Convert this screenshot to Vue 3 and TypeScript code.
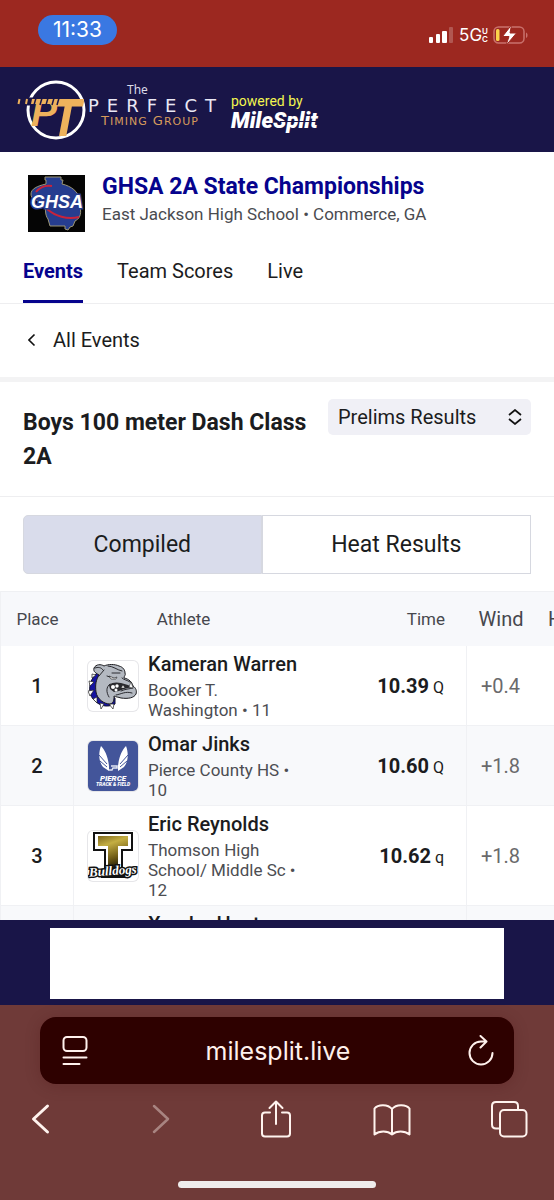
<script setup lang="ts">
import { ref } from 'vue'

interface Result {
  place: string
  name: string
  school: string
  grade: string
  time: string
  mark: string
  wind: string
  logo: 'bulldog' | 'pierce' | 'thomson' | 'none'
}

const tabs = ['Events', 'Team Scores', 'Live']
const activeTab = ref('Events')
const views = ['Compiled', 'Heat Results']
const activeView = ref('Compiled')
const round = ref('Prelims Results')
const address = ref('milesplit.live')

const results: Result[] = [
  { place: '1', name: 'Kameran Warren', school: 'Booker T. Washington', grade: '11', time: '10.39', mark: 'Q', wind: '+0.4', logo: 'bulldog' },
  { place: '2', name: 'Omar Jinks', school: 'Pierce County HS', grade: '10', time: '10.60', mark: 'Q', wind: '+1.8', logo: 'pierce' },
  { place: '3', name: 'Eric Reynolds', school: 'Thomson High School/ Middle Sc', grade: '12', time: '10.62', mark: 'q', wind: '+1.8', logo: 'thomson' },
  { place: '', name: 'Xander Hunt', school: '', grade: '', time: '', mark: '', wind: '', logo: 'none' },
]
</script>

<template>
  <div class="screen">
    <div class="status">
      <span class="clock">11:33</span>
      <div class="indicators">
        <svg class="signal" viewBox="0 0 24 16" width="24" height="16" aria-hidden="true">
          <rect x="0" y="10" width="4" height="6" rx="1" fill="#fff" />
          <rect x="7" y="7" width="4" height="9" rx="1" fill="#fff" />
          <rect x="13" y="4" width="5" height="12" rx="1" fill="#fff" />
          <rect x="20" y="0" width="4" height="16" rx="1" fill="#fff" opacity=".22" />
        </svg>
        <span class="network">5G</span>
        <span class="carrier"><span>U</span><span>C</span></span>
        <svg class="battery" viewBox="0 0 35 20" width="35" height="20" aria-hidden="true">
          <rect x="1" y="2" width="30" height="16" rx="4.500" fill="none" stroke="#c9716c" stroke-width="1.500" />
          <path d="M33 7.500v5.500c2-.6 2-4.900 0-5.500Z" fill="#c9716c" />
          <rect x="3" y="4" width="3.500" height="12" rx="1.500" fill="#fbd24a" />
          <path d="M18.500 0 9.500 11.500h6.500L13 20.500 23.500 8H17Z" fill="#fff" stroke="#9c2820" stroke-width="1" />
        </svg>
      </div>
    </div>

    <header class="brand">
      <svg class="ptg" viewBox="0 0 200 66" width="200" height="66" role="img" aria-label="The Perfect Timing Group">
        <circle cx="38" cy="33" r="28" fill="none" stroke="#fff" stroke-width="3" />
        <path d="M6 24.500h20" stroke="#191548" stroke-width="8" />
        <text x="13" y="49" class="pt-p">P</text>
        <text x="32" y="59" class="pt-t">T</text>
        <path d="M14 22h52l-1 5H13Z" fill="#eeb25c" />
        <path d="m1.500 22-1 5M9 22l-1 5" stroke="#eeb25c" stroke-width="2" />
        <path d="m18 21-2 7M24 21l-2 7M30 21l-2 7M36 21l-2 7M41 21l-2 7" stroke="#191548" stroke-width="1.500" />
        <text x="109" y="17" class="pt-the">The</text>
        <text x="70" y="35" class="pt-perfect">PERFECT</text>
        <text x="83" y="48" class="pt-timing">T<tspan class="sc">IMING</tspan> G<tspan class="sc">ROUP</tspan></text>
      </svg>
      <div class="powered">
        <span class="by">powered by</span>
        <span class="milesplit">MileSplit</span>
      </div>
    </header>

    <main class="page">
      <section class="meet">
        <svg class="meet-logo" viewBox="0 0 57 57" width="57" height="57" role="img" aria-label="GHSA">
          <rect width="57" height="57" fill="#050505" />
          <path d="M17 2h16v3h2l-1 4c9 2 17 8 17 15l1 8c2 8-1 12-5 14l-2 5-3 1-2 3-3-1v-3H22l-2-7c-4-5-1-11-5-17-7-1-12-3-12-8 0-5 6-8 15-10V5h-1Z" fill="#263d8f" stroke="#9c9675" stroke-width="1" />
          <path d="M8 17c4-5 10-7 16-6M19 34c8 7 20 11 32 8" fill="none" stroke="#c8233b" stroke-width="2" />
          <text x="3" y="33" class="ghsa">GHSA</text>
        </svg>
        <div>
          <h1>GHSA 2A State Championships</h1>
          <p>East Jackson High School • Commerce, GA</p>
        </div>
      </section>

      <nav class="tabs">
        <a v-for="tab in tabs" :key="tab" href="#" :class="{ active: tab === activeTab }" @click.prevent="activeTab = tab">{{ tab }}</a>
      </nav>

      <a class="all-events" href="#" @click.prevent>
        <svg viewBox="0 0 8 14" width="8" height="14" aria-hidden="true"><path d="M6.500 1.500 1 7l5.500 5.500" fill="none" stroke="#111" stroke-width="1.600" /></svg>
        <span>All Events</span>
      </a>

      <section class="event">
        <h2>Boys 100 meter Dash Class 2A</h2>
        <div class="round">
          <select v-model="round" aria-label="Round">
            <option>Prelims Results</option>
            <option>Finals Results</option>
          </select>
          <svg viewBox="0 0 14 16" width="14" height="16" aria-hidden="true"><path d="m1 6 6-5 6 5M1 10l6 5 6-5" fill="none" stroke="#111" stroke-width="1.700" /></svg>
        </div>
      </section>

      <div class="views">
        <button v-for="view in views" :key="view" type="button" :class="{ active: view === activeView }" @click="activeView = view">{{ view }}</button>
      </div>

      <div class="results">
        <table>
          <colgroup>
            <col class="c-place" /><col class="c-athlete" /><col class="c-time" /><col class="c-wind" /><col class="c-heat" />
          </colgroup>
          <thead>
            <tr>
              <th>Place</th>
              <th class="who">Athlete</th>
              <th class="time">Time</th>
              <th class="large">Wind</th>
              <th class="large heat">Heat</th>
            </tr>
          </thead>
          <tbody>
            <tr v-for="r in results" :key="r.name">
              <td class="place">{{ r.place }}</td>
              <td>
                <div class="athlete">
                  <svg v-if="r.logo === 'bulldog'" class="team" viewBox="0 0 50 50" role="img" aria-label="Bulldog">
                    <path d="M9 12C0 20 0 32 5 38c6 7 14 9 22 5l0-6-12-6-3-17Z" fill="#1513a0" stroke="#14142c" />
                    <path d="m1 20 5 1-4 4ZM0 30l6-1-4 6ZM5 38l4-2 0 6ZM12 42l4 1-3 5ZM21 43l5 0-1 5ZM4 13l4 1-4 3Z" fill="#fff" stroke="#222" stroke-width=".7" />
                    <path d="M6 7C8 3 13 3 16 5c4-2 11-2 15 0 4 1 6 4 6 7 1 2-1 3-1 5 5 1 8 4 9 8 3 2 4 5 3 8-2 4-8 5-15 4-3-1-5-1-7-2 0 4 0 7-4 8-6 0-13-5-14-12-1-7 0-12 3-17-3-2-6-3-5-7Z" fill="#b4b9c1" stroke="#1c1c20" stroke-width="1" />
                    <path d="M7 7c3-1 6-1 8 2M11 15l5-6M20 5c5 0 9 4 14 5M24 12l8 0M19 15l6 2M22 23c-4 3-4 8-1 13M28 34c6-1 9-4 16-2M34 17c2 2 5 2 8 4M45 27c-4 1-8 1-12 3" fill="none" stroke="#1c1c20" stroke-width=".9" stroke-linecap="round" />
                    <path d="M21 24c3-3 8-3 12-2l7 2 4 2-8 2-5 2-5 1-4-3Z" fill="#2a2a2e" />
                    <circle cx="25" cy="26" r="2" fill="#fff" /><circle cx="29" cy="25" r="1.700" fill="#fff" /><circle cx="28" cy="29" r="1.500" fill="#fff" />
                    <path d="m33 27 2-3 2 3ZM41 26l2-5 2 6Z" fill="#fff" stroke="#222" stroke-width=".5" />
                    <path d="m21 15 5 2 3-1-1 2h-5Z" fill="#fff" stroke="#1c1c20" stroke-width=".6" />
                  </svg>
                  <svg v-else-if="r.logo === 'pierce'" class="team" viewBox="0 0 50 50" role="img" aria-label="Pierce Track and Field">
                    <rect width="50" height="50" fill="#43559a" />
                    <path d="M13 5c-3 8-2 16 2 21l6 4 0-5C20 16 17 9 13 5ZM38 5c3 8 2 16-2 21l-6 4 0-5c1-9 4-16 8-20Z" fill="#fff" />
                    <path d="m11 14 8 9M12 20l7 6M40 14l-8 9M39 20l-7 6" stroke="#43559a" stroke-width="1" />
                    <path d="M23 25h6v2h-4l-1 2h-3" fill="none" stroke="#dfe4f2" stroke-width="1.500" />
                    <text x="25" y="40" text-anchor="middle" class="pierce">PIERCE</text>
                    <text x="25" y="45" text-anchor="middle" class="track">TRACK &amp; FIELD</text>
                  </svg>
                  <svg v-else-if="r.logo === 'thomson'" class="team" viewBox="0 0 50 50" role="img" aria-label="Thomson Bulldogs">
                    <defs>
                      <linearGradient id="gold" x1="0" x2=".3" y1="0" y2="1"><stop offset="0" stop-color="#7c661c" /><stop offset=".3" stop-color="#c4ae42" /><stop offset=".7" stop-color="#6d5913" /><stop offset="1" stop-color="#15120a" /></linearGradient>
                    </defs>
                    <path d="M5 1h40v19H35v21h2v6H13v-6h3V20H5Z" fill="#111" />
                    <path d="M7 3h36v15H33v23H18V18H7Z" fill="#fff" />
                    <path d="M10 5h30v10H30v26H20V15H10Z" fill="url(#gold)" />
                    <text x="25" y="44" text-anchor="middle" class="bulldogs" transform="rotate(-4 25 42)">Bulldogs</text>
                  </svg>
                  <span v-else class="team blank"></span>
                  <div>
                    <div class="name">{{ r.name }}</div>
                    <div class="school">{{ r.school }}<template v-if="r.grade"> • {{ r.grade }}</template></div>
                  </div>
                </div>
              </td>
              <td class="time"><strong>{{ r.time }}</strong> <span>{{ r.mark }}</span></td>
              <td class="wind">{{ r.wind }}</td>
              <td></td>
            </tr>
          </tbody>
        </table>
      </div>
    </main>

    <aside class="sponsor"><div></div></aside>

    <footer class="browser">
      <div class="address">
        <button type="button" aria-label="Page settings">
          <svg viewBox="0 0 26 32" width="26" height="32" fill="none" stroke="#fff1ec" stroke-width="2" stroke-linecap="round" aria-hidden="true">
            <rect x="1.500" y="2" width="23" height="14" rx="3.500" /><path d="M1.500 22.500h23M1.500 29h16" />
          </svg>
        </button>
        <input v-model="address" type="text" aria-label="Address" />
        <button type="button" aria-label="Reload">
          <svg viewBox="0 0 26 32" width="26" height="32" fill="none" stroke="#fff1ec" stroke-width="2" stroke-linecap="round" stroke-linejoin="round" aria-hidden="true">
            <path d="M24.500 18A11.500 11.500 0 1 1 13 6.500h5M12.500 1 18.500 6.500l-6 6" />
          </svg>
        </button>
      </div>
      <div class="tools">
        <button type="button" aria-label="Back">
          <svg viewBox="0 0 38 38"><path d="M25.500 6 11.500 19l14 13" stroke-width="3" /></svg>
        </button>
        <button type="button" aria-label="Forward" disabled>
          <svg viewBox="0 0 38 38"><path d="m15 6 14 13-14 13" stroke-width="2.500" /></svg>
        </button>
        <button type="button" aria-label="Share">
          <svg viewBox="0 0 38 38"><path d="M14 12.500H9q-3 0-3 3v18q0 3 3 3h22q3 0 3-3v-18q0-3-3-3h-5M20 24V2M13.500 8 20 1.500 26.500 8" /></svg>
        </button>
        <button type="button" aria-label="Bookmarks">
          <svg viewBox="0 0 38 38"><path d="M19 34.500V9c-4-5-14-5-17.500-.5v26c5-4 13-4 17.500 0 4.500-4 12.500-4 17.500 0v-26C33 4 23 4 19 9" /></svg>
        </button>
        <button type="button" aria-label="Tabs">
          <svg viewBox="0 0 38 38"><path d="M9.500 28.500H6q-4 0-4-4V6q0-4 4-4h18q4 0 4 4v3.500" /><rect x="10" y="10" width="26.500" height="26.500" rx="4" /></svg>
        </button>
      </div>
      <div class="home"></div>
    </footer>
  </div>
</template>

<style>
body {
  margin: 0;
}
</style>

<style scoped>
* {
  box-sizing: border-box;
}
.screen {
  display: flex;
  flex-direction: column;
  height: 100vh;
  overflow: hidden;
  background: #fff;
  color: #1b1c20;
  font-family: Roboto, "Liberation Sans", sans-serif;
}
button,
select,
input {
  font-family: inherit;
  color: inherit;
  border: 0;
  padding: 0;
  margin: 0;
  background: none;
}
a {
  color: inherit;
  text-decoration: none;
}
h1,
h2,
p {
  margin: 0;
}
.status {
  flex: none;
  display: flex;
  justify-content: space-between;
  align-items: flex-start;
  height: 67px;
  padding: 15px 26px 0 38px;
  background: #9c2820;
  color: #fff;
  font-family: Inter, sans-serif;
}
.clock {
  width: 79px;
  border-radius: 15px;
  background: #3a78e2;
  font-size: 21px;
  line-height: 30px;
  text-align: center;
}
.indicators {
  display: flex;
  align-items: center;
  padding-top: 10px;
}
.network {
  margin-left: 6px;
  font-size: 17px;
  line-height: 20px;
}
.carrier {
  display: flex;
  flex-direction: column;
  font-size: 8px;
  font-weight: 600;
  line-height: 8px;
}
.battery {
  margin-left: 5px;
}
.brand {
  flex: none;
  display: flex;
  align-items: center;
  height: 85px;
  padding-left: 18px;
  background: #191548;
}
.ptg {
  flex: none;
  overflow: visible;
}
.pt-p,
.pt-t {
  font: italic 700 39px "Liberation Sans", sans-serif;
  fill: #eeb25c;
}
.pt-t {
  font-size: 50px;
}
.pt-the {
  font: 12px "Noto Sans", sans-serif;
  fill: #dcdbe8;
}
.pt-perfect {
  font: 18px "DejaVu Sans", sans-serif;
  letter-spacing: 8px;
  fill: #e9e7f5;
}
.pt-timing {
  font: 13px "DejaVu Sans", sans-serif;
  letter-spacing: 1px;
  fill: #d69b5c;
}
.sc {
  font-size: 11px;
}
.powered {
  display: flex;
  flex-direction: column;
  margin: 5px 0 0 13px;
}
.by {
  color: #f3f64f;
  font-size: 14px;
  line-height: 18px;
}
.milesplit {
  position: relative;
  color: #fff;
  font-size: 22px;
  font-style: italic;
  font-weight: 900;
  line-height: 22px;
}
.milesplit::after {
  content: "";
  position: absolute;
  top: 11px;
  right: 0;
  width: 38px;
  height: 1px;
  background: #191548;
}
.page {
  flex: 1;
  min-height: 0;
  overflow: hidden;
}
.meet {
  display: flex;
  gap: 17px;
  padding: 23px 28px 0;
}
.meet-logo {
  flex: none;
}
.ghsa {
  font: italic 700 18px "Liberation Sans", sans-serif;
  fill: #fff;
  stroke: #263d8f;
  stroke-width: 3px;
  paint-order: stroke;
}
h1 {
  color: #06038d;
  font-size: 23px;
  font-weight: 700;
  line-height: 24px;
}
.meet p {
  margin-top: 5px;
  color: #4a4b50;
  font-size: 17px;
  line-height: 20px;
}
.tabs {
  display: flex;
  gap: 34px;
  padding: 0 23px;
  border-bottom: 1px solid #eeeef0;
  font-size: 20px;
  line-height: 24px;
}
.tabs a {
  padding: 27px 0 17px;
  border-bottom: 3px solid transparent;
}
.tabs .active {
  border-color: #06038d;
  color: #06038d;
  font-weight: 700;
}
.all-events {
  display: flex;
  align-items: center;
  gap: 17px;
  height: 78px;
  padding: 0 28px 2px;
  border-bottom: 5px solid #f3f3f4;
  font-size: 20px;
}
.event {
  display: flex;
  justify-content: space-between;
  align-items: flex-start;
  gap: 20px;
  padding: 17px 23px 22px;
  border-bottom: 1px solid #eeeef0;
}
h2 {
  padding-top: 7px;
  font-size: 23px;
  font-weight: 700;
  line-height: 34px;
}
.round {
  position: relative;
  flex: none;
  width: 203px;
}
.round select {
  display: block;
  width: 100%;
  height: 36px;
  padding: 0 40px 0 10px;
  border-radius: 5px;
  background: #f0f0f6;
  appearance: none;
  font-size: 20px;
}
.round svg {
  position: absolute;
  top: 10px;
  right: 9px;
  pointer-events: none;
}
.views {
  display: flex;
  margin: 18px 23px 17px;
}
.views button {
  flex: 270;
  height: 59px;
  border: 1px solid #d6d8e0;
  background: #fff;
  font-size: 23px;
}
.views button:first-child {
  flex: 239;
  border-radius: 5px 0 0 5px;
}
.views .active {
  background: #d9dceb;
}
.results {
  overflow-x: auto;
  overflow-y: hidden;
  scrollbar-width: none;
}
table {
  width: 635px;
  table-layout: fixed;
  border-collapse: separate;
  border-spacing: 0;
  border-left: 1px solid #f0f1f4;
}
.c-place {
  width: 73px;
}
.c-athlete {
  width: 225px;
}
.c-time {
  width: 168px;
}
.c-wind {
  width: 68px;
}
.c-heat {
  width: 100px;
}
th {
  height: 55px;
  padding: 0;
  border-top: 1px solid #eff0f3;
  background: #f7f8fb;
  color: #46474d;
  font-size: 17px;
  font-weight: 400;
}
th.who {
  padding-right: 6px;
}
th.large {
  font-size: 20px;
}
th.heat {
  padding-left: 13px;
  text-align: left;
}
td {
  padding: 0;
  border-bottom: 1px solid #f0f1f4;
}
tbody tr:nth-child(even) {
  background: #f8f9fb;
}
td.place {
  border-right: 1px solid #f0f1f4;
  font-size: 20px;
  font-weight: 500;
  text-align: center;
}
.time {
  padding-right: 22px;
  text-align: right;
}
td.time {
  border-right: 1px solid #f0f1f4;
  font-size: 16px;
}
td.time strong {
  font-size: 20px;
}
td.wind {
  padding-left: 14px;
  color: #6a6a6c;
  font-size: 20px;
}
.athlete {
  display: flex;
  align-items: center;
  gap: 10px;
  padding: 5px 0 5px 14px;
}
.team {
  flex: none;
  width: 50px;
  height: 50px;
  border-radius: 5px;
  box-shadow: 0 0 0 1px #e6e6e9;
}
.blank {
  visibility: hidden;
}
.name {
  font-size: 20px;
  font-weight: 500;
  line-height: 26px;
  white-space: nowrap;
}
.school {
  margin-top: 3px;
  min-height: 40px;
  color: #4c4d52;
  font-size: 17px;
  line-height: 20px;
}
.pierce {
  font: italic 900 8px Roboto, sans-serif;
  fill: #fff;
}
.track {
  font: italic 900 5px Roboto, sans-serif;
  fill: #fff;
}
.bulldogs {
  font: italic 700 13px "Liberation Serif", serif;
  fill: #fff;
  stroke: #111;
  stroke-width: 3px;
  paint-order: stroke;
}
.sponsor {
  flex: none;
  height: 85px;
  padding: 8px 9% 6px;
  background: #191548;
}
.sponsor div {
  height: 100%;
  background: #fff;
}
.browser {
  flex: none;
  display: flex;
  flex-direction: column;
  padding-top: 12px;
  background: #6f3a38;
  color: #fff1ec;
}
.address {
  display: flex;
  align-items: center;
  height: 67px;
  margin: 0 40px;
  padding: 0 20px 0 22px;
  border-radius: 16px;
  background: #2e0100;
  box-shadow: 0 2px 16px rgba(60, 10, 10, 0.2);
}
.address svg {
  display: block;
}
.address input {
  flex: 1;
  min-width: 0;
  font-family: Inter, sans-serif;
  font-size: 25px;
  text-align: center;
}
.tools {
  display: flex;
  justify-content: space-between;
  padding: 16px 26px 0 22px;
}
.tools button {
  width: 38px;
  height: 38px;
}
.tools svg {
  display: block;
  fill: none;
  stroke: #fff3ee;
  stroke-width: 2px;
  stroke-linecap: round;
  stroke-linejoin: round;
}
.tools button:disabled {
  opacity: 0.4;
}
.home {
  width: 198px;
  height: 7px;
  margin: 43px auto 12px;
  border-radius: 4px;
  background: #efecec;
}
</style>
